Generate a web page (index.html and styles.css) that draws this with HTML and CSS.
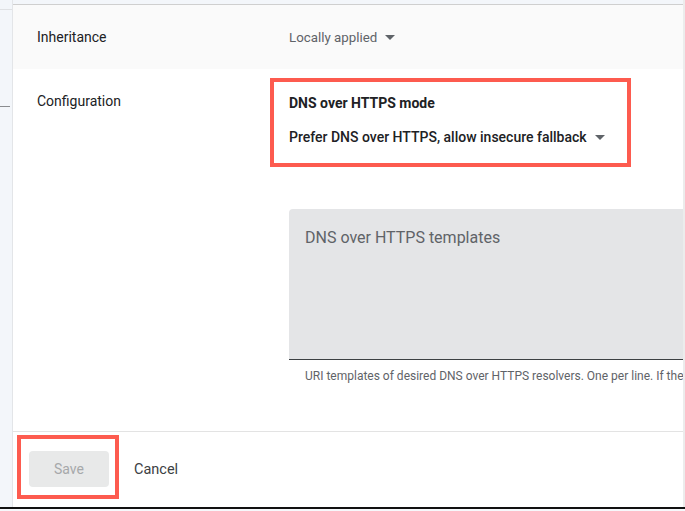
FILE: index.html
```html
<!DOCTYPE html>
<html lang="en">
<head>
<meta charset="utf-8">
<title>DNS over HTTPS</title>
<link rel="stylesheet" href="styles.css">
</head>
<body>
<div class="frame">
  <div class="side">
    <div class="side-top"></div>
    <div class="side-mark"></div>
  </div>
  <div class="main">
    <div class="topband"></div>
    <div class="panel">
      <div class="row row-inherit">
        <div class="label">Inheritance</div>
        <div class="value">
          <span class="select-muted">Locally applied</span>
          <span class="caret"></span>
        </div>
      </div>
      <div class="row row-config">
        <div class="label">Configuration</div>
        <div class="value">
          <div class="highlight mode">
            <div class="mode-title">DNS over HTTPS mode</div>
            <div class="mode-select">
              <span>Prefer DNS over HTTPS, allow insecure fallback</span>
              <span class="caret"></span>
            </div>
          </div>
          <div class="textarea">
            <span class="ta-label">DNS over HTTPS templates</span>
          </div>
          <div class="helper">URI templates of desired DNS over HTTPS resolvers. One per line. If the</div>
        </div>
      </div>
      <div class="footer">
        <div class="highlight save-wrap">
          <button class="btn-save" disabled>Save</button>
        </div>
        <button class="btn-cancel">Cancel</button>
      </div>
    </div>
  </div>
</div>
<div class="bottombar"></div>
</body>
</html>
```

FILE: styles.css
```css
* { box-sizing: border-box; }
html, body {
  margin: 0;
  padding: 0;
  width: 685px;
  height: 511px;
  overflow: hidden;
  background: #f6f8fb;
  font-family: Roboto, "Liberation Sans", Arial, sans-serif;
  color: #202124;
}
.frame {
  display: flex;
  height: 507px;
}
.side {
  width: 13px;
  flex: none;
  background: #f3f6fa;
  border-right: 1px solid #e3e5e8;
}
.side-top {
  height: 10px;
  border-bottom: 1px solid #dfe1e4;
}
.side-mark {
  margin-top: 96px;
  width: 10px;
  height: 1px;
  background: #8a8c8f;
}
.main {
  flex: 1;
  display: flex;
  flex-direction: column;
  min-width: 0;
  border-right: 2px solid #ececec;
}
.topband {
  height: 5px;
  flex: none;
  background: #f3f6fa;
  border-bottom: 1px solid #cfcfcf;
}
.panel {
  flex: 1;
  background: #ffffff;
  display: flex;
  flex-direction: column;
  overflow: hidden;
}
.row {
  display: flex;
}
.label {
  width: 276px;
  flex: none;
  padding-left: 24px;
  font-size: 14px;
  line-height: 16px;
  color: #202124;
}
.value {
  flex: 1;
  min-width: 0;
}
.row-inherit {
  height: 64px;
  background: #fafafa;
  align-items: center;
}
.row-inherit .value {
  display: flex;
  align-items: center;
}
.select-muted {
  font-size: 13.3px;
  color: #5f6368;
}
.caret {
  display: inline-block;
  width: 0;
  height: 0;
  border-left: 5.5px solid transparent;
  border-right: 5.5px solid transparent;
  border-top: 5.5px solid #5f6368;
  margin-left: 8px;
}
.row-config {
  height: 362px;
}
.row-config .label {
  padding-top: 24px;
}
.highlight {
  border: 4px solid #fd5b4f;
}
.mode {
  width: 361px;
  margin-left: -19px;
  margin-top: 9px;
  padding: 13px 15px 18px;
}
.mode-title {
  font-size: 14px;
  line-height: 16px;
  font-weight: 700;
}
.mode-select {
  margin-top: 18px;
  display: flex;
  align-items: center;
  font-size: 14px;
  line-height: 16px;
  font-weight: 500;
}
.textarea {
  margin-top: 42px;
  width: 420px;
  height: 151px;
  background: #e4e5e7;
  border-radius: 4px 4px 0 0;
  border-bottom: 1px solid #3c4043;
  padding: 19px 16px;
}
.ta-label {
  font-size: 16px;
  line-height: 18px;
  color: #5f6368;
}
.helper {
  margin-top: 9px;
  padding-left: 16px;
  font-size: 12px;
  line-height: 14px;
  color: #5f6368;
  white-space: nowrap;
}
.footer {
  flex: 1;
  border-top: 1px solid #e3e3e3;
  display: flex;
  align-items: flex-start;
  padding: 3px 0 0 4px;
}
.save-wrap {
  padding: 12px 6px 8px 8px;
}
.btn-save {
  width: 80px;
  height: 36px;
  border: none;
  border-radius: 4px;
  background: #e8e9e9;
  color: #a6a8aa;
  font-family: inherit;
  font-size: 14px;
  font-weight: 400;
  padding: 0;
}
.btn-cancel {
  margin-left: 15px;
  margin-top: 16px;
  height: 36px;
  padding: 0;
  border: none;
  background: transparent;
  color: #3c4043;
  font-family: inherit;
  font-size: 14.5px;
  font-weight: 400;
}
.bottombar {
  height: 2px;
  background: #111111;
}
```
